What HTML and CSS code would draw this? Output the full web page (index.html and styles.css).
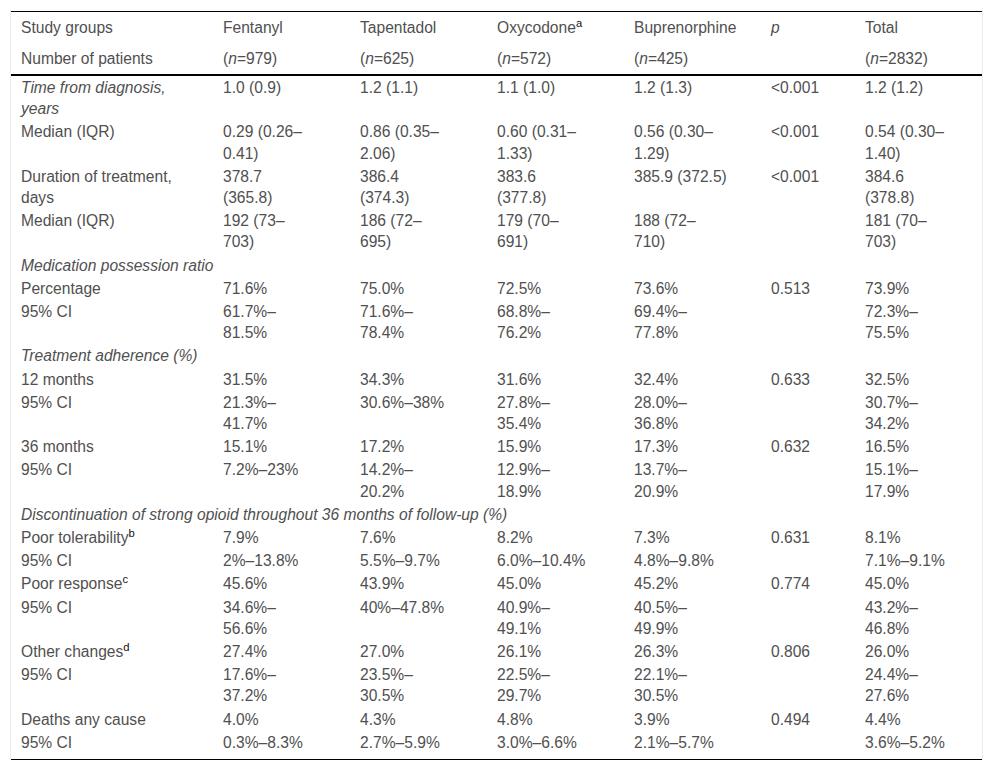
FILE: index.html
```html
<!DOCTYPE html>
<html lang="en">
<head>
<meta charset="utf-8">
<title>Study groups table</title>
<link rel="stylesheet" href="styles.css">
</head>
<body>
<div class="table-wrap">
<table class="data">
<colgroup>
<col class="c1"><col class="c2"><col class="c3"><col class="c4"><col class="c5"><col class="c6"><col class="c7">
</colgroup>
<thead>
<tr><th>Study groups</th><th>Fentanyl</th><th>Tapentadol</th><th>Oxycodone<sup>a</sup></th><th>Buprenorphine</th><th><i>p</i></th><th>Total</th></tr>
<tr><th>Number of patients</th><th>(<i>n</i>=979)</th><th>(<i>n</i>=625)</th><th>(<i>n</i>=572)</th><th>(<i>n</i>=425)</th><th></th><th>(<i>n</i>=2832)</th></tr>
</thead>
<tbody>
<tr><td><i>Time from diagnosis,<br>years</i></td><td>1.0 (0.9)</td><td>1.2 (1.1)</td><td>1.1 (1.0)</td><td>1.2 (1.3)</td><td>&lt;0.001</td><td>1.2 (1.2)</td></tr>
<tr><td>Median (IQR)</td><td>0.29 (0.26–<br>0.41)</td><td>0.86 (0.35–<br>2.06)</td><td>0.60 (0.31–<br>1.33)</td><td>0.56 (0.30–<br>1.29)</td><td>&lt;0.001</td><td>0.54 (0.30–<br>1.40)</td></tr>
<tr><td>Duration of treatment,<br>days</td><td>378.7<br>(365.8)</td><td>386.4<br>(374.3)</td><td>383.6<br>(377.8)</td><td>385.9 (372.5)</td><td>&lt;0.001</td><td>384.6<br>(378.8)</td></tr>
<tr><td>Median (IQR)</td><td>192 (73–<br>703)</td><td>186 (72–<br>695)</td><td>179 (70–<br>691)</td><td>188 (72–<br>710)</td><td></td><td>181 (70–<br>703)</td></tr>
<tr class="section"><td colspan="7"><i>Medication possession ratio</i></td></tr>
<tr><td>Percentage</td><td>71.6%</td><td>75.0%</td><td>72.5%</td><td>73.6%</td><td>0.513</td><td>73.9%</td></tr>
<tr><td>95% CI</td><td>61.7%–<br>81.5%</td><td>71.6%–<br>78.4%</td><td>68.8%–<br>76.2%</td><td>69.4%–<br>77.8%</td><td></td><td>72.3%–<br>75.5%</td></tr>
<tr class="section"><td colspan="7"><i>Treatment adherence (%)</i></td></tr>
<tr><td>12 months</td><td>31.5%</td><td>34.3%</td><td>31.6%</td><td>32.4%</td><td>0.633</td><td>32.5%</td></tr>
<tr><td>95% CI</td><td>21.3%–<br>41.7%</td><td>30.6%–38%</td><td>27.8%–<br>35.4%</td><td>28.0%–<br>36.8%</td><td></td><td>30.7%–<br>34.2%</td></tr>
<tr><td>36 months</td><td>15.1%</td><td>17.2%</td><td>15.9%</td><td>17.3%</td><td>0.632</td><td>16.5%</td></tr>
<tr><td>95% CI</td><td>7.2%–23%</td><td>14.2%–<br>20.2%</td><td>12.9%–<br>18.9%</td><td>13.7%–<br>20.9%</td><td></td><td>15.1%–<br>17.9%</td></tr>
<tr class="section"><td colspan="7"><i>Discontinuation of strong opioid throughout 36 months of follow-up (%)</i></td></tr>
<tr><td>Poor tolerability<sup>b</sup></td><td>7.9%</td><td>7.6%</td><td>8.2%</td><td>7.3%</td><td>0.631</td><td>8.1%</td></tr>
<tr><td>95% CI</td><td>2%–13.8%</td><td>5.5%–9.7%</td><td>6.0%–10.4%</td><td>4.8%–9.8%</td><td></td><td>7.1%–9.1%</td></tr>
<tr><td>Poor response<sup>c</sup></td><td>45.6%</td><td>43.9%</td><td>45.0%</td><td>45.2%</td><td>0.774</td><td>45.0%</td></tr>
<tr><td>95% CI</td><td>34.6%–<br>56.6%</td><td>40%–47.8%</td><td>40.9%–<br>49.1%</td><td>40.5%–<br>49.9%</td><td></td><td>43.2%–<br>46.8%</td></tr>
<tr><td>Other changes<sup>d</sup></td><td>27.4%</td><td>27.0%</td><td>26.1%</td><td>26.3%</td><td>0.806</td><td>26.0%</td></tr>
<tr><td>95% CI</td><td>17.6%–<br>37.2%</td><td>23.5%–<br>30.5%</td><td>22.5%–<br>29.7%</td><td>22.1%–<br>30.5%</td><td></td><td>24.4%–<br>27.6%</td></tr>
<tr><td>Deaths any cause</td><td>4.0%</td><td>4.3%</td><td>4.8%</td><td>3.9%</td><td>0.494</td><td>4.4%</td></tr>
<tr class="last"><td>95% CI</td><td>0.3%–8.3%</td><td>2.7%–5.9%</td><td>3.0%–6.6%</td><td>2.1%–5.7%</td><td></td><td>3.6%–5.2%</td></tr>
</tbody>
</table>
</div>
</body>
</html>
```
FILE: styles.css
```css
html, body {
  margin: 0;
  padding: 0;
  background: #fff;
}

body {
  font-family: "Liberation Sans", Arial, sans-serif;
  font-size: 15.6px;
  color: #505050;
}

.table-wrap {
  margin: 10px 0 0 10px;
  padding-top: 1px;
  width: 971px;
  border-left: 1px solid #ececec;
  border-right: 1px solid #ececec;
}

.data {
  width: 971px;
  border-collapse: collapse;
  table-layout: fixed;
  border-top: 1px solid #000;
  border-bottom: 1px solid #000;
}

.c1 { width: 202px; }
.c2, .c3, .c4, .c5 { width: 137px; }
.c6 { width: 94px; }
.c7 { width: 127px; }

.data th,
.data td {
  text-align: left;
  vertical-align: top;
  white-space: nowrap;
  line-height: 21.2px;
  font-weight: normal;
  padding: 1px 0 1px 10px;
}

.data th {
  padding-top: 5px;
  padding-bottom: 4.8px;
}

.data thead {
  border-bottom: 2px solid #000;
}

.data .last td {
  padding-bottom: 6px;
}

.data sup {
  font-size: 0.72em;
  line-height: 0;
  vertical-align: 0.5em;
  color: #111;
  font-weight: normal;
}
```
